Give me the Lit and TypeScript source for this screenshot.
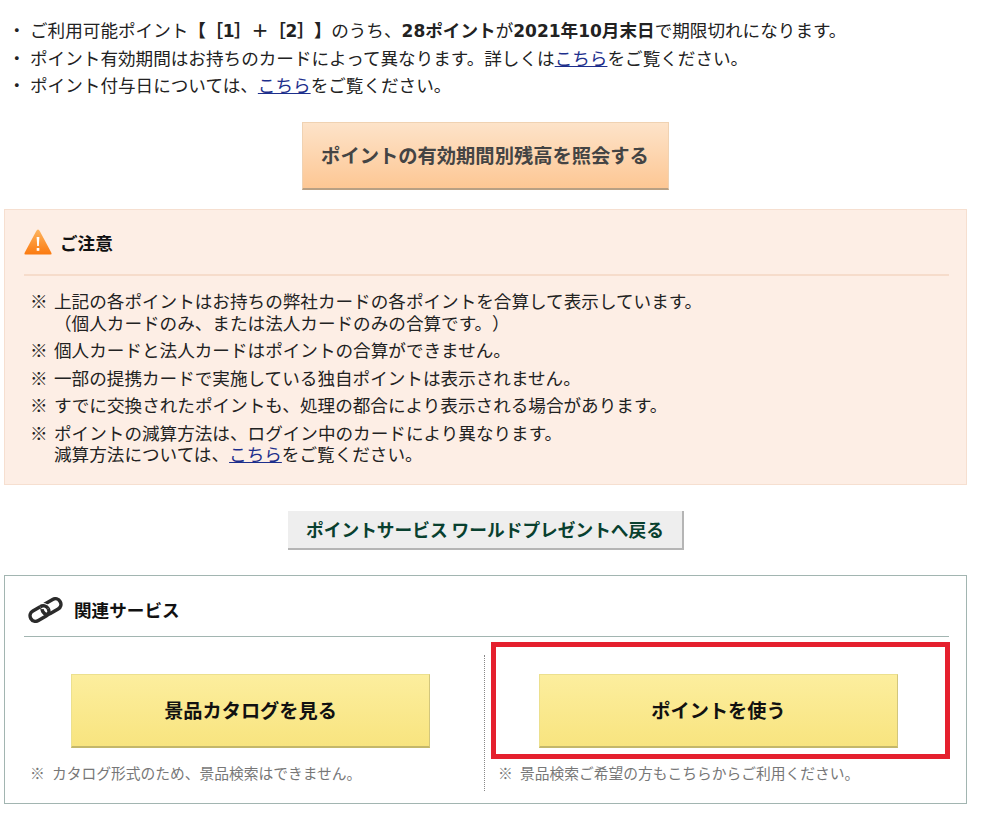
import { LitElement, html, css } from "lit";
import { customElement } from "lit/decorators.js";

@customElement("app-root")
export class AppRoot extends LitElement {
  static styles = css`
    :host { display: block; width: 1001px; height: 815px; overflow: hidden; position: relative; background: #fff;
      font-family: "Noto Sans CJK JP", sans-serif; font-size: 17.6px; color: #222; text-spacing-trim: space-all; }
    * { box-sizing: border-box; }
    a { color: #1d2f8c; text-decoration: underline; }
    b { font-weight: 700; }
    .num { font-family: "DejaVu Sans", sans-serif; font-size: 17px; }
    .brk { letter-spacing: -0.45px; }
    .bullets { list-style: none; margin: 0; padding: 16px 0 0 8px; }
    .bullets li { display: flex; height: 27.5px; line-height: 27.5px; white-space: nowrap; }
    .bullets .mark { width: 22px; }
    .center { display: flex; justify-content: center; }
    .btn { display: flex; align-items: center; justify-content: center; font-weight: 700; white-space: nowrap; text-decoration: none; }
    .orange { width: 367px; height: 68px; margin: 23px 0 0 -31px; font-size: 19.3px; color: #444;
      background: linear-gradient(#fde3c9, #fdc794); border: 1px solid #f0d2b2; border-bottom: 2px solid #b8a084; }
    .notice { margin: 19px 34px 0 4px; height: 276px; background: #fdeee5; border: 1px solid #f6dfd0; padding: 0 17px 0 19px; }
    .notice-head { display: flex; align-items: center; height: 66px; border-bottom: 2px solid #f6dccb; gap: 8px; font-size: 17.6px; font-weight: 700; color: #111; padding-top: 1px; }
    .notes { list-style: none; margin: 0; padding: 14px 0 0 6px; }
    .notes li { display: flex; line-height: 22px; margin-bottom: 5.5px; white-space: nowrap; }
    .notes li.tight { line-height: 21px; }
    .notes .mark { width: 24px; flex: none; }
    .back { width: 396px; height: 39px; margin: 26px 0 0 -29px; font-size: 17.7px; color: #08402f;
      background: #eee; border-right: 2px solid #b5b5b5; border-bottom: 2px solid #b5b5b5; }
    .related { margin: 25px 34px 0 4px; height: 229px; border: 1px solid #a2b5b1; padding: 0 17px 0 19px; }
    .related-head { display: flex; align-items: center; height: 61px; gap: 11px; border-bottom: 1px solid #a2b5b1; font-size: 17.6px; font-weight: 700; color: #111; padding: 8px 0 0 4px; }
    .cols { display: grid; grid-template-columns: 460px 1fr; margin-top: 18px; }
    .col { height: 136px; padding-top: 19px; }
    .col + .col { border-left: 1px dotted #888; padding-left: 54px; }
    .yellow { width: 359px; height: 74px; margin-left: 47px; font-size: 19.2px; color: #111;
      background: linear-gradient(#fcee9e, #f8e47f); border: 1px solid #ece08e; border-bottom: 2px solid #c4b76a; border-right-color: #d2c67c; }
    .col + .col .yellow { margin-left: 0; }
    .cap { font-size: 14.75px; color: #777; margin: 14px 0 0 6px; line-height: 22px; white-space: nowrap; display: flex; }
    .col + .col .cap { margin-left: -41px; }
    .cap span { width: 22px; flex: none; }
    .redbox { position: absolute; left: 491px; top: 642px; width: 459px; height: 117px; border: 5px solid #e5202e; }
  `;

  render() {
    return html`
      <ul class="bullets">
        <li><span class="mark">・</span><span>ご利用可能ポイント<b class="brk">【［<span class="num">1</span>］＋［<span class="num">2</span>］】</b>のうち、<b><span class="num">28</span>ポイント</b>が<b><span class="num">2021</span>年<span class="num">10</span>月末日</b>で期限切れになります。</span></li>
        <li><span class="mark">・</span><span>ポイント有効期間はお持ちのカードによって異なります。詳しくは<a href="#">こちら</a>をご覧ください。</span></li>
        <li><span class="mark">・</span><span>ポイント付与日については、<a href="#">こちら</a>をご覧ください。</span></li>
      </ul>
      <div class="center"><a class="btn orange">ポイントの有効期間別残高を照会する</a></div>
      <section class="notice">
        <div class="notice-head">
          <svg width="28" height="26" viewBox="0 0 28 26">
            <defs><linearGradient id="w" x1="0" y1="0" x2="0" y2="1"><stop offset="0" stop-color="#fdb45f"/><stop offset="1" stop-color="#fb7a10"/></linearGradient></defs>
            <path d="M14 0.5 Q15 0.5 16 2.5 L27.5 24 Q28 25.5 26.5 25.5 L1.5 25.5 Q0 25.5 0.5 24 L12 2.5 Q13 0.5 14 0.5Z" fill="url(#w)"/>
            <path d="M12.6 8h2.8l-.6 9h-1.6z" fill="#fff"/><rect x="12.7" y="19" width="2.6" height="2.8" fill="#fff"/>
          </svg>
          ご注意
        </div>
        <ul class="notes">
          <li><span class="mark">※</span><span>上記の各ポイントはお持ちの弊社カードの各ポイントを合算して表示しています。<br>（個人カードのみ、または法人カードのみの合算です。）</span></li>
          <li><span class="mark">※</span><span>個人カードと法人カードはポイントの合算ができません。</span></li>
          <li><span class="mark">※</span><span>一部の提携カードで実施している独自ポイントは表示されません。</span></li>
          <li><span class="mark">※</span><span>すでに交換されたポイントも、処理の都合により表示される場合があります。</span></li>
          <li class="tight"><span class="mark">※</span><span>ポイントの減算方法は、ログイン中のカードにより異なります。<br>減算方法については、<a href="#">こちら</a>をご覧ください。</span></li>
        </ul>
      </section>
      <div class="center"><a class="btn back">ポイントサービス ワールドプレゼントへ戻る</a></div>
      <section class="related">
        <div class="related-head">
          <svg width="35" height="26" viewBox="0 0 35 26" fill="none" stroke="#2b2b2b" stroke-width="3.5">
            <rect x="1.5" y="11" width="20" height="11" rx="5.5" transform="rotate(-30 11.5 16.5)"/>
            <rect x="13.5" y="4" width="20" height="11" rx="5.5" transform="rotate(-30 23.5 9.5)"/>
            <path d="M15.5 11 A5.5 5.5 0 0 1 21 16.5" transform="rotate(-30 11.5 16.5)" stroke="#fff" stroke-width="6"/>
            <path d="M15.5 11 A5.5 5.5 0 0 1 21.5 16.5" transform="rotate(-30 11.5 16.5)"/>
          </svg>
          関連サービス
        </div>
        <div class="cols">
          <div class="col">
            <a class="btn yellow">景品カタログを見る</a>
            <p class="cap"><span>※</span>カタログ形式のため、景品検索はできません。</p>
          </div>
          <div class="col">
            <a class="btn yellow">ポイントを使う</a>
            <p class="cap"><span>※</span>景品検索ご希望の方もこちらからご利用ください。</p>
          </div>
        </div>
      </section>
      <div class="redbox"></div>
    `;
  }
}
